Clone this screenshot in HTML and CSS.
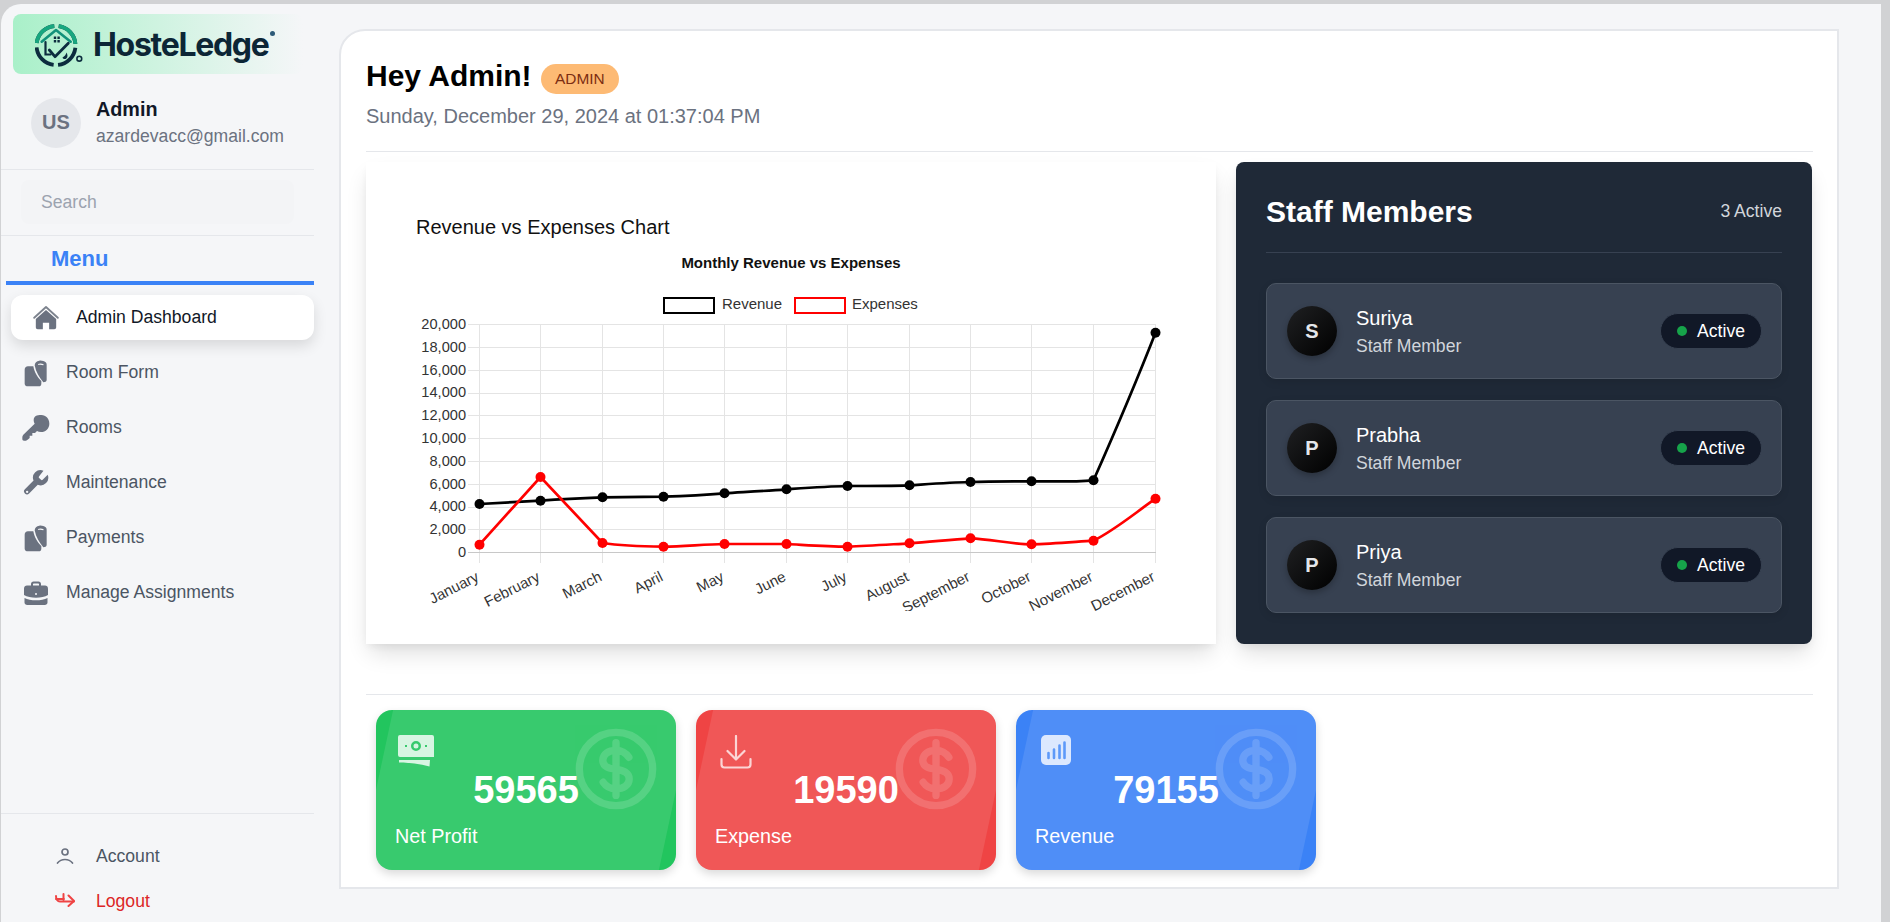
FILE: index.html
```html
<!DOCTYPE html>
<html>
<head>
    <meta charset="utf-8">
    <title>HosteLedge</title>
    <link rel="stylesheet" href="styles.css">
</head>
<body>
<div class="app">
    <aside class="sidebar">
        <div class="logo">
            <svg class="logo-mark" width="50" height="46" viewBox="0 0 50 46" fill="none">
                <circle cx="21" cy="24.500" r="19.500" stroke="#0c2c3e" stroke-width="3.800" stroke-dasharray="26 4.600" stroke-dashoffset="-2.300"/>
                <circle cx="21" cy="24.500" r="19.500" stroke="#18a77f" stroke-width="3.800" stroke-dasharray="0 63.500 26 4.600 26 30" />
                <path d="M6.700 20.700 21 9l14.700 11.700" stroke="#12917a" stroke-width="2.600" stroke-linecap="round" stroke-linejoin="round"/>
                <path d="M10.500 21v12.500h5" stroke="#0c2c3e" stroke-width="2.200" stroke-linecap="round"/>
                <path d="M14.300 29l5.700 6.700 13.300-13.400" stroke="#0c2c3e" stroke-width="2.800" stroke-linecap="round" stroke-linejoin="round"/>
                <path d="M18.800 15.500h2.400v2.400h-2.400zM22.400 15.500h2.400v2.400h-2.400zM18.800 19.100h2.400v2.400h-2.400zM22.400 19.100h2.400v2.400h-2.400z" fill="#0c2c3e"/>
                <path d="M27.500 36.500c2-1 3.500-3 4-5 1 2 1.700 4.500-.2 6-1.200 1-3.200.6-3.800-1z" fill="#0c2c3e"/>
                <circle cx="44.300" cy="37.700" r="2.400" stroke="#0c2c3e" stroke-width="1.600"/>
            </svg>
            <span class="logo-text">HosteLedge</span>
            <span class="logo-reg"></span>
        </div>

        <div class="user">
            <div class="user-avatar">US</div>
            <div>
                <div class="user-name">Admin</div>
                <div class="user-mail">azardevacc@gmail.com</div>
            </div>
        </div>

        <div class="search-wrap">
            <input class="search" type="text" placeholder="Search">
        </div>

        <div class="menu-title">Menu</div>

        <nav class="nav">
            <a class="nav-item active">
                <svg class="icon-home" width="26" height="26" viewBox="0 0 24 24" fill="#6b7280">
                    <path d="M1.100 11.800 12 1.800l10.900 10" fill="none" stroke="#7d838e" stroke-width="1.700" stroke-linecap="round" stroke-linejoin="round"/>
                    <path d="M2.600 13 12 4.700l9.400 8.300v7.600c0 1.100-.7 1.800-1.800 1.800h-4.700v-6.100H9.100v6.100H4.400c-1.100 0-1.800-.7-1.800-1.800z"/>
                </svg>
                Admin Dashboard
            </a>
            <a class="nav-item">
                <svg class="nav-icon" width="28" height="30" viewBox="66 60 84 90">
                    <path d="M74 95c0-6 4-10 10-10h16c4 20 12 32 24 44v8c0 5-3 8-8 8H84c-6 0-10-3-10-8z"/>
                    <path fill-rule="evenodd" d="M104 82c1-8 5-13 14-14 8-1 14 2 19 5 2 2 3 4 3 7v45c0 3-2 6-6 7l-4 1c-12-15-22-30-26-51zm10-4c5-3 12-2 17 1l-1 3c-5-2-10-3-15-1z"/>
                </svg>
                Room Form
            </a>
            <a class="nav-item">
                <svg class="nav-icon" width="28" height="30" viewBox="66 226 84 90">
                    <path d="M124 232c14 0 24 11 24 26 0 14-11 25-25 25-5 0-9-1-12-3l-6 6h-8v8h-8v7c-3 3-7 6-11 8h-6c-3 0-5-2-5-5v-5c0-3 1-6 3-8l34-33c-2-3-3-7-3-10 0-13 9-16 23-16z"/>
                </svg>
                Rooms
            </a>
            <a class="nav-item">
                <svg class="nav-icon" width="28" height="28" viewBox="0 0 24 24">
                    <path fill-rule="evenodd" d="M14.700 6.300a1 1 0 0 0 0 1.400l1.600 1.600a1 1 0 0 0 1.400 0l4.300-4.300a6.500 6.500 0 0 1-8.500 8.500l-7.400 7.400a2.500 2.500 0 0 1-3.600-3.600l7.400-7.400a6.500 6.500 0 0 1 8.500-8.500z"/>
                    <circle cx="4.400" cy="19.600" r="1" fill="#f5f6f8"/>
                </svg>
                Maintenance
            </a>
            <a class="nav-item">
                <svg class="nav-icon" width="28" height="30" viewBox="66 60 84 90">
                    <path d="M74 95c0-6 4-10 10-10h16c4 20 12 32 24 44v8c0 5-3 8-8 8H84c-6 0-10-3-10-8z"/>
                    <path fill-rule="evenodd" d="M104 82c1-8 5-13 14-14 8-1 14 2 19 5 2 2 3 4 3 7v45c0 3-2 6-6 7l-4 1c-12-15-22-30-26-51zm10-4c5-3 12-2 17 1l-1 3c-5-2-10-3-15-1z"/>
                </svg>
                Payments
            </a>
            <a class="nav-item">
                <svg class="nav-icon" width="28" height="28" viewBox="0 0 28 28">
                    <path d="M9 7V5c0-1.500 1-2.500 2.500-2.500h5C18 2.500 19 3.500 19 5v2h-2V5.200c0-.5-.3-.7-.7-.7h-4.600c-.4 0-.7.200-.7.700V7z"/>
                    <path d="M5 6.500h18c1.700 0 3 1.200 3 3v6.500c-3 1.800-7.500 2.700-12 2.700S5 18 2 16V9.500c0-1.800 1.300-3 3-3z"/>
                    <path d="M2.500 19c3 1.500 7 2.300 11.500 2.300s8.500-.8 11.500-2.300v4.500c0 1.500-1.200 2.500-2.800 2.500H5.300c-1.600 0-2.800-1-2.800-2.500z"/>
                    <circle cx="14" cy="15" r="1" fill="#f5f6f8"/>
                </svg>
                Manage Assignments
            </a>
        </nav>

        <div class="side-bottom">
            <a class="bottom-item">
                <svg class="bottom-icon" width="18" height="18" viewBox="0 0 18 18" fill="none" stroke="#6b7280" stroke-width="1.700" stroke-linecap="round">
                    <circle cx="9" cy="5" r="3"/>
                    <path d="M1.500 16c2-2.500 4.500-3.500 7.500-3.500s5.500 1 7.500 3.500"/>
                </svg>
                Account
            </a>
            <a class="bottom-item logout">
                <svg class="bottom-icon" width="20" height="18" viewBox="0 0 20 18" fill="none" stroke="#ef4444" stroke-width="2" stroke-linecap="round" stroke-linejoin="round">
                    <path d="M1 4c0 3 1.500 5.500 4 5.500h14"/>
                    <path d="M8.500 2v6M1 7h8M13.500 3.500 19 9l-5.500 5"/>
                </svg>
                Logout
            </a>
        </div>
    </aside>

    <main class="panel">
        <div class="head-row">
            <h1 class="hello">Hey Admin!</h1>
            <span class="role">ADMIN</span>
        </div>
        <div class="date">Sunday, December 29, 2024 at 01:37:04 PM</div>

        <div class="top-grid">
            <section class="chart-card">
                <h3 class="chart-title">Revenue vs Expenses Chart</h3>
                <svg class="chart" width="790" height="370" viewBox="400 241 790 370">
                    <text class="chart-head" x="791" y="268" text-anchor="middle">Monthly Revenue vs Expenses</text>

                    <rect x="664" y="298" width="50" height="15" fill="#fff" stroke="#000" stroke-width="2"/>
                    <text class="chart-text" x="722" y="309">Revenue</text>
                    <rect x="795" y="298" width="50" height="15" fill="#fff" stroke="#f00" stroke-width="2"/>
                    <text class="chart-text" x="852" y="309">Expenses</text>

                    <path class="grid-line" d="M468 324.500H1156M468 347.500H1156M468 370.500H1156M468 393.500H1156M468 415.500H1156M468 438.500H1156M468 461.500H1156M468 484.500H1156M468 507.500H1156M468 529.500H1156"/>
                    <path class="grid-line" d="M479.500 324V563M540.500 324V563M602.500 324V563M663.500 324V563M724.500 324V563M786.500 324V563M847.500 324V563M909.500 324V563M970.500 324V563M1031.500 324V563M1093.500 324V563M1155.500 324V563"/>
                    <path class="axis-line" d="M468 552.500H1156"/>

                    <g class="tick-text" text-anchor="end">
                        <text x="466" y="329">20,000</text>
                        <text x="466" y="352">18,000</text>
                        <text x="466" y="375">16,000</text>
                        <text x="466" y="397">14,000</text>
                        <text x="466" y="420">12,000</text>
                        <text x="466" y="443">10,000</text>
                        <text x="466" y="466">8,000</text>
                        <text x="466" y="489">6,000</text>
                        <text x="466" y="511">4,000</text>
                        <text x="466" y="534">2,000</text>
                        <text x="466" y="557">0</text>
                    </g>

                    <g class="chart-text" text-anchor="end">
                        <text x="480" y="580" transform="rotate(-27 480 580)">January</text>
                        <text x="541" y="580" transform="rotate(-27 541 580)">February</text>
                        <text x="603" y="580" transform="rotate(-27 603 580)">March</text>
                        <text x="664" y="580" transform="rotate(-27 664 580)">April</text>
                        <text x="725" y="580" transform="rotate(-27 725 580)">May</text>
                        <text x="787" y="580" transform="rotate(-27 787 580)">June</text>
                        <text x="848" y="580" transform="rotate(-27 848 580)">July</text>
                        <text x="910" y="580" transform="rotate(-27 910 580)">August</text>
                        <text x="971" y="580" transform="rotate(-27 971 580)">September</text>
                        <text x="1032" y="580" transform="rotate(-27 1032 580)">October</text>
                        <text x="1094" y="580" transform="rotate(-27 1094 580)">November</text>
                        <text x="1156" y="580" transform="rotate(-27 1156 580)">December</text>
                    </g>

                    <path class="line" stroke="#000" d="M479.500 504 540.500 500.700C561 499 581 498 602.500 497.300 622 497 642 497 663.500 496.700 684 496 704 495 724.500 493.300 745 492 765 491 786.500 489.300 806 488 827 486.500 847.500 486 868 486 889 486 909.500 485.300 930 484 950 482.500 970.500 482 991 481.500 1011 481.500 1031.500 481.300 1052 481.500 1073 482 1093.500 480.300 1118 425 1135 385 1155.500 332.700"/>
                    <path class="line" stroke="#f00" d="M479.500 544.700 540.500 477 602.500 543C622 546 642 546.500 663.500 546.700 684 546.500 704 544.300 724.500 544 745 544 765 544 786.500 544 806 545 827 546.500 847.500 546.700 868 546 889 544.500 909.500 543.300 930 542 950 539.500 970.500 538.300 991 539 1011 544.300 1031.500 544.300 1052 544 1073 542 1093.500 540.700 1115 530 1135 513 1155.500 498.700"/>

                    <g fill="#000">
                        <circle cx="479.500" cy="504" r="5"/><circle cx="540.500" cy="500.700" r="5"/><circle cx="602.500" cy="497.300" r="5"/><circle cx="663.500" cy="496.700" r="5"/><circle cx="724.500" cy="493.300" r="5"/><circle cx="786.500" cy="489.300" r="5"/><circle cx="847.500" cy="486" r="5"/><circle cx="909.500" cy="485.300" r="5"/><circle cx="970.500" cy="482" r="5"/><circle cx="1031.500" cy="481.300" r="5"/><circle cx="1093.500" cy="480.300" r="5"/><circle cx="1155.500" cy="332.700" r="5"/>
                    </g>
                    <g fill="#f00">
                        <circle cx="479.500" cy="544.700" r="5"/><circle cx="540.500" cy="477" r="5"/><circle cx="602.500" cy="543" r="5"/><circle cx="663.500" cy="546.700" r="5"/><circle cx="724.500" cy="544" r="5"/><circle cx="786.500" cy="544" r="5"/><circle cx="847.500" cy="546.700" r="5"/><circle cx="909.500" cy="543.300" r="5"/><circle cx="970.500" cy="538.300" r="5"/><circle cx="1031.500" cy="544.300" r="5"/><circle cx="1093.500" cy="540.700" r="5"/><circle cx="1155.500" cy="498.700" r="5"/>
                    </g>
                </svg>
            </section>

            <section class="staff-card">
                <div class="staff-head">
                    <h2 class="staff-title">Staff Members</h2>
                    <span class="staff-count">3 Active</span>
                </div>
                <div class="staff-list">
                    <div class="staff-row">
                        <div class="staff-avatar">S</div>
                        <div class="staff-info">
                            <div class="staff-name">Suriya</div>
                            <div class="staff-role">Staff Member</div>
                        </div>
                        <div class="status"><span class="status-dot"></span>Active</div>
                    </div>
                    <div class="staff-row">
                        <div class="staff-avatar">P</div>
                        <div class="staff-info">
                            <div class="staff-name">Prabha</div>
                            <div class="staff-role">Staff Member</div>
                        </div>
                        <div class="status"><span class="status-dot"></span>Active</div>
                    </div>
                    <div class="staff-row">
                        <div class="staff-avatar">P</div>
                        <div class="staff-info">
                            <div class="staff-name">Priya</div>
                            <div class="staff-role">Staff Member</div>
                        </div>
                        <div class="status"><span class="status-dot"></span>Active</div>
                    </div>
                </div>
            </section>
        </div>

        <div class="stats">
            <div class="stat green">
                <svg class="stat-icon" width="36" height="32" viewBox="0 0 36 32">
                    <path fill-rule="evenodd" d="M2 0h32a2 2 0 0 1 2 2v20H2a2 2 0 0 1-2-2V2a2 2 0 0 1 2-2zm16 6a5 5 0 1 0 0 10 5 5 0 0 0 0-10zm0 2.500a2.500 2.500 0 1 1 0 5 2.500 2.500 0 0 1 0-5zM7 10v2h2v-2zm20 0v2h2v-2z" fill="#fff" fill-opacity=".8"/>
                    <path d="M1 25h31l-.5 6.500C22 29 11 27.500 1 27.500z" fill="#fff" fill-opacity=".8"/>
                </svg>
                <div class="stat-value">59565</div>
                <div class="stat-label">Net Profit</div>
                <svg class="stat-coin" width="88" height="88" viewBox="0 0 24 24" fill="none" stroke="#fff" stroke-width="2" stroke-linecap="round">
                    <circle cx="12" cy="12" r="10"/>
                    <path d="M15.500 8.800c-.8-1.200-2-1.900-3.500-1.900-2 0-3.600 1-3.600 2.700 0 1.800 1.600 2.200 3.600 2.500s3.600.8 3.600 2.600c0 1.700-1.600 2.700-3.600 2.700-1.500 0-2.700-.6-3.500-1.800M12 4.800v14.400"/>
                </svg>
            </div>
            <div class="stat red">
                <svg class="stat-icon" width="32" height="34" viewBox="0 0 32 34" fill="none" stroke="#fff" stroke-opacity=".75" stroke-width="2.200" stroke-linecap="round" stroke-linejoin="round">
                    <path d="M16 1v23M7.500 16l8.500 8.500 8.500-8.500"/>
                    <path d="M1.500 24v5.500c0 2 1 3 3 3h23c2 0 3-1 3-3V24"/>
                </svg>
                <div class="stat-value">19590</div>
                <div class="stat-label">Expense</div>
                <svg class="stat-coin" width="88" height="88" viewBox="0 0 24 24" fill="none" stroke="#fff" stroke-width="2" stroke-linecap="round">
                    <circle cx="12" cy="12" r="10"/>
                    <path d="M15.500 8.800c-.8-1.200-2-1.900-3.500-1.900-2 0-3.600 1-3.600 2.700 0 1.800 1.600 2.200 3.600 2.500s3.600.8 3.600 2.600c0 1.700-1.600 2.700-3.600 2.700-1.500 0-2.700-.6-3.500-1.800M12 4.800v14.400"/>
                </svg>
            </div>
            <div class="stat blue">
                <svg class="stat-icon" width="30" height="30" viewBox="0 0 30 30">
                    <rect width="30" height="30" rx="5" fill="#fff" fill-opacity=".8"/>
                    <path d="M7.500 18v5M13 14.500V23M18.500 10.500V23M23.500 7.500V23" stroke="#5d99f9" stroke-width="2.600" stroke-linecap="round"/>
                </svg>
                <div class="stat-value">79155</div>
                <div class="stat-label">Revenue</div>
                <svg class="stat-coin" width="88" height="88" viewBox="0 0 24 24" fill="none" stroke="#fff" stroke-width="2" stroke-linecap="round">
                    <circle cx="12" cy="12" r="10"/>
                    <path d="M15.500 8.800c-.8-1.200-2-1.900-3.500-1.900-2 0-3.600 1-3.600 2.700 0 1.800 1.600 2.200 3.600 2.500s3.600.8 3.600 2.600c0 1.700-1.600 2.700-3.600 2.700-1.500 0-2.700-.6-3.500-1.800M12 4.800v14.400"/>
                </svg>
            </div>
        </div>
    </main>
</div>
</body>
</html>
```

FILE: styles.css
```css
* {
    box-sizing: border-box;
}
html, body {
    margin: 0;
    height: 100%;
    overflow: hidden;
}
body {
    background: #d1d2d4;
    font-family: "Liberation Sans", Arial, sans-serif;
    color: #111827;
    padding: 4px 0 0 1px;
}
h1, h2, h3 {
    margin: 0;
}

.app {
    display: flex;
    width: 1880px;
    height: 918px;
    background: #f5f6f8;
    border-top-left-radius: 20px;
}

/* sidebar */
.sidebar {
    width: 313px;
    display: flex;
    flex-direction: column;
    flex-shrink: 0;
}
.logo {
    display: flex;
    align-items: center;
    height: 60px;
    width: 290px;
    margin: 10px 0 0 12px;
    padding-left: 22px;
    border-radius: 8px;
    background: linear-gradient(90deg, #a9f0c9, #f5f6f8);
}
.logo-text {
    font-family: Inter, "Liberation Sans", sans-serif;
    font-weight: 700;
    font-size: 32px;
    letter-spacing: -1.300px;
    color: #0c2636;
    margin-left: 8px;
}
.logo-reg {
    width: 5px;
    height: 5px;
    border-radius: 50%;
    background: #2d5a78;
    margin: -22px 0 0 1px;
}
.user {
    display: flex;
    align-items: center;
    gap: 15px;
    padding: 22px 0 20px 30px;
    border-bottom: 1px solid #e5e7eb;
}
.user-avatar {
    width: 50px;
    height: 50px;
    border-radius: 50%;
    background: #e5e7eb;
    color: #6b7280;
    font-weight: 700;
    font-size: 20px;
    display: flex;
    align-items: center;
    justify-content: center;
}
.user-name {
    font-weight: 700;
    font-size: 19.800px;
    line-height: 26px;
}
.user-mail {
    font-size: 17.600px;
    line-height: 26px;
    padding-top: 1px;
    color: #6b7280;
}
.search-wrap {
    padding: 10px 20px 11px 20px;
    border-bottom: 1px solid #e5e7eb;
}
.search {
    display: block;
    width: 273px;
    height: 44px;
    border: none;
    border-radius: 8px;
    background: #f3f4f6;
    padding: 0 20px;
    font-family: inherit;
    font-size: 17.600px;
}
.search::placeholder {
    color: #9ca3af;
}
.menu-title {
    margin-left: 5px;
    padding-left: 45px;
    height: 49px;
    line-height: 46px;
    font-size: 22px;
    font-weight: 700;
    color: #3b82f6;
    border-bottom: 4px solid #3b82f6;
}
.nav {
    display: flex;
    flex-direction: column;
    gap: 10px;
    margin-top: 10px;
}
.nav-item {
    display: flex;
    align-items: center;
    height: 45px;
    margin-left: 10px;
    font-size: 17.600px;
    color: #4b5563;
    padding-left: 11px;
}
.nav-icon {
    fill: #6b7280;
    margin-right: 16px;
}
.nav-item.active {
    background: #fff;
    color: #111827;
    border-radius: 12px;
    box-shadow: 0 6px 14px rgba(0, 0, 0, 0.12);
    padding-left: 22px;
}
.icon-home {
    margin-right: 17px;
}
.side-bottom {
    margin-top: auto;
    border-top: 1px solid #e5e7eb;
    padding: 22px 0 1px 0;
    display: flex;
    flex-direction: column;
    gap: 5px;
}
.bottom-item {
    display: flex;
    align-items: center;
    height: 40px;
    padding-left: 54px;
    font-size: 17.600px;
    color: #4b5563;
}
.bottom-icon {
    width: 20px;
    margin-right: 21px;
}
.logout {
    color: #dc2626;
}

/* main panel */
.panel {
    width: 1500px;
    height: 860px;
    margin: 25px 0 0 25px;
    padding: 26px 24px 0 25px;
    background: #fff;
    border: 2px solid #e5e7eb;
    border-top-left-radius: 26px;
}
.head-row {
    display: flex;
    align-items: flex-start;
    gap: 9px;
    height: 36px;
}
.hello {
    font-size: 30px;
    line-height: 36px;
    padding-top: 1px;
    color: #000;
}
.role {
    margin-top: 7px;
    height: 30px;
    line-height: 30px;
    padding: 0 14.500px;
    border-radius: 15px;
    background: #fdba74;
    color: #7c2d12;
    font-size: 15.400px;
}
.date {
    margin-top: 9px;
    font-size: 20px;
    line-height: 28px;
    color: #6b7280;
    padding-bottom: 21px;
    border-bottom: 1px solid #e5e7eb;
}
.top-grid {
    display: grid;
    grid-template-columns: 850px 576px;
    gap: 20px;
    margin-top: 10px;
    height: 482px;
}
.chart-card {
    padding: 51px 0 0 34px;
    background: #fff;
    box-shadow: 0 12px 22px -4px rgba(0, 0, 0, 0.14), 0 4px 8px -2px rgba(0, 0, 0, 0.06);
}
.chart-title {
    padding-left: 16px;
    font-size: 20px;
    line-height: 28px;
    font-weight: 400;
    color: #111;
}
.chart {
    display: block;
}
.chart-head {
    font: 700 15px "Liberation Sans", Arial, sans-serif;
    fill: #111;
}
.chart-text {
    font: 15px "Liberation Sans", Arial, sans-serif;
    fill: #333;
}
.tick-text {
    font: 14.600px "Liberation Sans", Arial, sans-serif;
    fill: #333;
}
.grid-line {
    stroke: #e4e4e4;
    fill: none;
}
.axis-line {
    stroke: #c8c8c8;
    fill: none;
}
.line {
    fill: none;
    stroke-width: 2.700;
}

/* staff */
.staff-card {
    background: #1f2937;
    border-radius: 8px;
    padding: 32px 30px 30px 30px;
    box-shadow: 0 12px 22px -4px rgba(0, 0, 0, 0.14), 0 4px 8px -2px rgba(0, 0, 0, 0.06);
}
.staff-head {
    display: flex;
    justify-content: space-between;
    align-items: center;
    height: 59px;
    padding-bottom: 23px;
    border-bottom: 1px solid #374151;
    margin-bottom: 30px;
}
.staff-title {
    font-size: 30px;
    line-height: 36px;
    color: #fff;
}
.staff-count {
    font-size: 17.600px;
    color: #d1d5db;
}
.staff-list {
    display: flex;
    flex-direction: column;
    gap: 21px;
}
.staff-row {
    display: flex;
    align-items: center;
    height: 96px;
    padding: 0 19px 0 20px;
    background: #374151;
    border: 1px solid #4b5563;
    border-radius: 10px;
    box-shadow: 0 3px 8px rgba(0, 0, 0, 0.1);
}
.staff-avatar {
    width: 50px;
    height: 50px;
    border-radius: 50%;
    background: linear-gradient(135deg, #1f2022, #000);
    color: #e5e7eb;
    font-size: 20px;
    font-weight: 700;
    display: flex;
    align-items: center;
    justify-content: center;
    box-shadow: 0 3px 6px rgba(0, 0, 0, 0.25);
}
.staff-info {
    margin-left: 19px;
    padding-top: 2px;
    flex: 1;
}
.staff-name {
    font-size: 20px;
    line-height: 28px;
    color: #fff;
}
.staff-role {
    font-size: 17.600px;
    line-height: 28px;
    color: #d1d5db;
}
.status {
    display: flex;
    align-items: center;
    gap: 10px;
    height: 36px;
    padding: 0 16px;
    background: #111827;
    border: 1px solid #374151;
    border-radius: 18px;
    color: #fff;
    font-size: 17.600px;
}
.status-dot {
    width: 10px;
    height: 10px;
    border-radius: 50%;
    background: #16a34a;
}

/* stat cards */
.stats {
    display: flex;
    gap: 20px;
    margin-top: 50px;
    padding: 15px 0 0 10px;
    border-top: 1px solid #e5e7eb;
}
.stat {
    position: relative;
    overflow: hidden;
    width: 300px;
    height: 160px;
    border-radius: 16px;
    color: #fff;
    box-shadow: 0 4px 10px rgba(0, 0, 0, 0.15);
}
.stat::before {
    content: "";
    position: absolute;
    inset: 0;
    background: rgba(255, 255, 255, 0.1);
    clip-path: polygon(5.700% 0, 100% 0, 100% 50%, 94.300% 100%, 0 100%, 0 50%);
}
.green {
    background: #22c55e;
}
.red {
    background: #ef4444;
}
.blue {
    background: #3b82f6;
}
.stat-icon {
    position: relative;
    display: block;
    margin: 25px 0 0 22px;
}
.red .stat-icon {
    margin-left: 24px;
}
.blue .stat-icon {
    margin-left: 25px;
}
.stat-value {
    position: absolute;
    left: 0;
    right: 0;
    top: 58px;
    text-align: center;
    font-size: 38px;
    line-height: 44px;
    font-weight: 700;
}
.stat-label {
    position: absolute;
    left: 19px;
    top: 113px;
    font-size: 19.800px;
    line-height: 26px;
}
.stat-coin {
    position: absolute;
    right: 16px;
    top: 15px;
    opacity: 0.15;
}
```
